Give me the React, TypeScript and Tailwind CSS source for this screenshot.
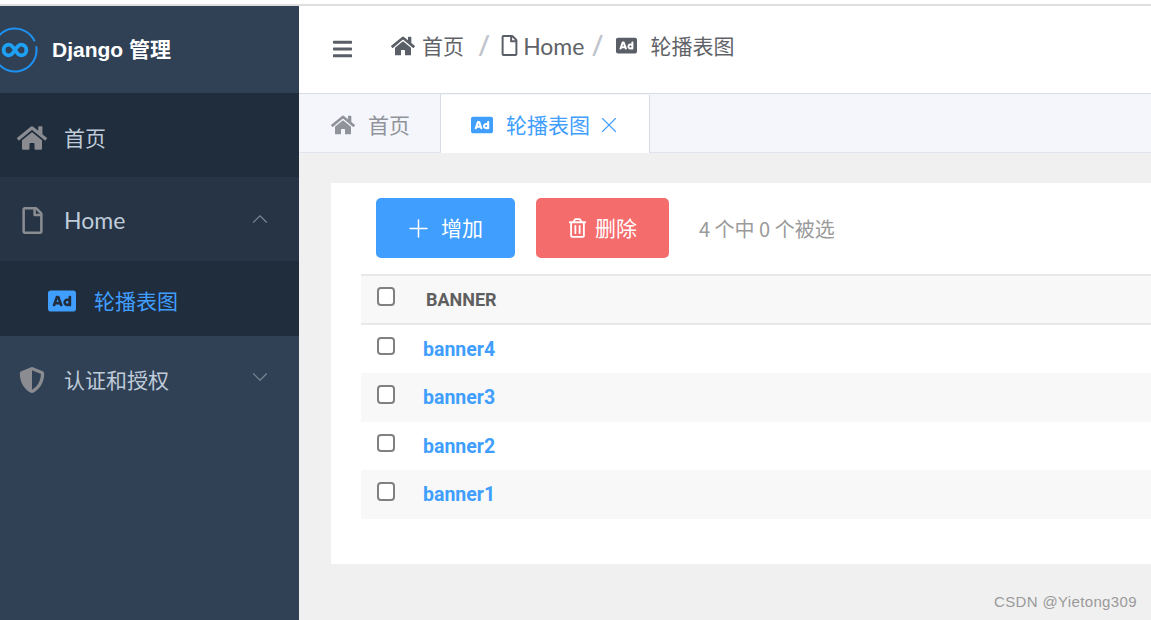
import { FaHome, FaRegFile, FaShieldAlt, FaAd, FaBars, FaRegTrashAlt } from 'react-icons/fa'
import { ChevronDown, ChevronUp, Plus, X } from 'lucide-react'

const cjk = "font-['Lato','Noto_Sans_CJK_SC',sans-serif]"

const rows = [
  { name: 'banner4', striped: false },
  { name: 'banner3', striped: true },
  { name: 'banner2', striped: false },
  { name: 'banner1', striped: true },
]

function Checkbox() {
  return <span className="block w-[18.5px] h-[18.5px] rounded-[4px] border-2 border-[#808080] bg-white" />
}

function Logo() {
  return (
    <svg viewBox="0 0 48 48" className="w-[48px] h-[48px] shrink-0 -ml-[9px]" fill="none">
      <circle cx="24" cy="24" r="21.5" stroke="#1e90f0" strokeWidth="2" strokeDasharray="129 6" transform="rotate(-10 24 24)" />
      <path
        d="M24 24c-2.2-3.4-4-5.4-6-5.4a5.4 5.4 0 0 0 0 10.8c2 0 3.8-2 6-5.4c2.2-3.4 4-5.4 6-5.4a5.4 5.4 0 0 1 0 10.8c-2 0-3.8-2-6-5.4z"
        stroke="#1ea0f5"
        strokeWidth="3.8"
      />
    </svg>
  )
}

function Sidebar() {
  return (
    <aside className={`w-[299px] shrink-0 bg-[#304156] ${cjk}`}>
      <div className="h-[87px] flex items-center gap-[13px] overflow-hidden">
        <Logo />
        <span className="text-white font-bold text-[21px] font-['Liberation_Sans','Noto_Sans_CJK_SC',sans-serif]">Django 管理</span>
      </div>
      <div className="h-[84px] bg-[#1f2d3d] flex items-center pl-[17px] pt-[5px]">
        <FaHome className="w-[30px] h-[30px] text-[#8a8c91]" />
        <span className="ml-[17px] text-[21px] text-[#bfcbd9]">首页</span>
      </div>
      <div className="h-[84px] bg-[#263445] flex items-center pl-[22px] pr-[26px] pt-[2px]">
        <FaRegFile className="w-[21px] h-[27px] text-[#8a8c91]" />
        <span className="ml-[21px] text-[23px] text-[#bfcbd9] flex-1">Home</span>
        <ChevronUp className="w-[26px] h-[26px] text-[#7b8794] -mt-[2px]" strokeWidth={1} />
      </div>
      <div className="h-[75px] bg-[#1f2d3d] flex items-center pl-[48px] pt-[5px]">
        <FaAd className="w-[28px] h-[28px] text-[#409eff]" />
        <span className="ml-[18px] text-[21px] text-[#409eff]">轮播表图</span>
      </div>
      <div className="h-[87px] flex items-center pl-[19px] pr-[26px]">
        <FaShieldAlt className="w-[26px] h-[28px] text-[#8a8c91]" />
        <span className="ml-[19px] text-[21px] text-[#bfcbd9] flex-1">认证和授权</span>
        <ChevronDown className="w-[26px] h-[26px] text-[#7b8794] -mt-[6px]" strokeWidth={1} />
      </div>
    </aside>
  )
}

function Navbar() {
  return (
    <header className="h-[88px] shrink-0 bg-white border-b border-[#d8dce5] flex items-center pl-[34px] text-[#5f6368] text-[21px]">
      <FaBars className="w-[19px] h-[22px] text-[#5a5e66] -mt-[1px]" />
      <div className="ml-[39px] flex items-center -mt-[8px]">
        <FaHome className="w-[24px] h-[24px] text-[#5a5e66]" />
        <span className="ml-[7px]">首页</span>
        <span className="ml-[14px] text-[#c0c4cc] font-bold text-[26px]">/</span>
        <FaRegFile className="ml-[11px] w-[17px] h-[21px] text-[#5a5e66]" />
        <span className="ml-[5px] text-[23px] leading-[28px]">Home</span>
        <span className="ml-[7px] text-[#c0c4cc] font-bold text-[26px]">/</span>
        <FaAd className="ml-[12px] w-[21px] h-[21px] text-[#5a5e66]" />
        <span className="ml-[14px]">轮播表图</span>
      </div>
    </header>
  )
}

function Tabs() {
  return (
    <div className="h-[59px] shrink-0 bg-[#f4f6fb] border-b border-[#dfe4ed] flex text-[21px]">
      <div className="w-[142px] flex items-center pl-[32px] pt-[3px] border-r border-[#d8dce5] text-[#909399]">
        <FaHome className="w-[24px] h-[24px]" />
        <span className="ml-[13px]">首页</span>
      </div>
      <div className="w-[209px] mt-[1px] -mb-px bg-white border-r border-[#d8dce5] flex items-center pl-[30px] pt-[1px] text-[#409eff]">
        <FaAd className="w-[22px] h-[22px]" />
        <span className="ml-[13px]">轮播表图</span>
        <X className="ml-[6px] w-[26px] h-[26px]" strokeWidth={1} />
      </div>
    </div>
  )
}

function Toolbar() {
  return (
    <div className="flex items-center pl-[45px] pt-[15px] font-['Noto_Sans_CJK_SC',sans-serif]">
      <button className="w-[139px] h-[60px] rounded-[5px] bg-[#409eff] text-white text-[21px] flex items-center pl-[28px]">
        <Plus className="w-[29px] h-[29px]" strokeWidth={1.25} />
        <span className="ml-[8px]">增加</span>
      </button>
      <button className="ml-[21px] w-[133px] h-[60px] rounded-[5px] bg-[#f56c6c] text-white text-[21px] flex items-center pl-[33px]">
        <FaRegTrashAlt className="w-[17px] h-[20px]" />
        <span className="ml-[9px]">删除</span>
      </button>
      <span className="ml-[30px] mt-[2px] text-[20px] text-[#9a9a9a]">4 个中 0 个被选</span>
    </div>
  )
}

function Table() {
  return (
    <div className="ml-[30px] mt-[16px] font-['Roboto',sans-serif]">
      <div className="h-[50.5px] bg-[#f8f8f8] border-y-2 border-[#e8e8e8] flex items-center pl-[15.5px]">
        <div className="-mt-[6px]"><Checkbox /></div>
        <span className="ml-[31px] text-[18px] font-bold text-[#5f5f5f]">BANNER</span>
      </div>
      {rows.map((row) => (
        <div key={row.name} className={`h-[48.5px] flex pl-[15.5px] ${row.striped ? 'bg-[#f8f8f8]' : 'bg-white'}`}>
          <div className="pt-[12px]"><Checkbox /></div>
          <a className="ml-[28px] pt-[13px] text-[19.5px] leading-[24px] font-bold text-[#409eff]">{row.name}</a>
        </div>
      ))}
    </div>
  )
}

export default function App() {
  return (
    <div className="relative w-[1151px] h-[620px] overflow-hidden bg-white">
      <div className="h-[4px] bg-white" />
      <div className="h-[2px] bg-[#dedede]" />
      <div className="flex h-[614px]">
        <Sidebar />
        <main className={`flex-1 flex flex-col min-w-0 bg-[#f0f0f0] ${cjk}`}>
          <Navbar />
          <Tabs />
          <div className="flex-1 pl-[32px] pt-[30px]">
            <section className="w-[820px] h-[381px] bg-white">
              <Toolbar />
              <Table />
            </section>
          </div>
        </main>
      </div>
      <span className="absolute left-[994px] top-[591px] text-[15px] tracking-[0.35px] text-[#9a9a9a] font-['Liberation_Sans',sans-serif]">CSDN @Yietong309</span>
    </div>
  )
}
